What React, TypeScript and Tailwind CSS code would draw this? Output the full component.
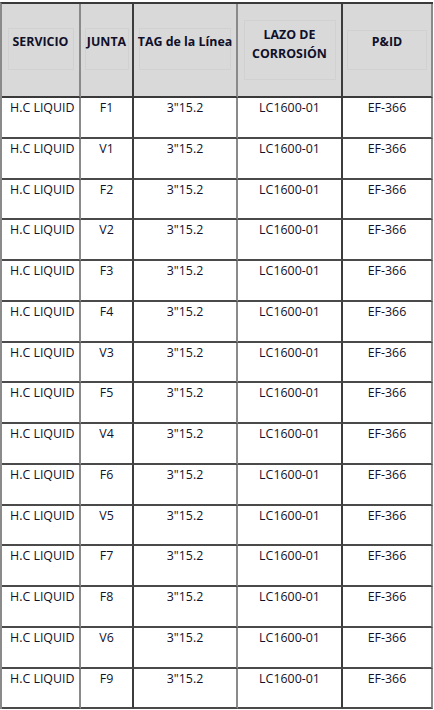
import React from "react";

const rows = [
  "F1", "V1", "F2", "V2", "F3", "F4", "V3", "F5", "V4", "F6", "V5", "F7", "F8", "V6", "F9",
];

const font = { fontFamily: '"Open Sans", "Noto Sans", Arial, sans-serif' };

function HeadCell({ children, box, dark }: { children: React.ReactNode; box: string; dark?: boolean }) {
  return (
    <div
      className={`h-[94px] bg-[#d9d9d9] border-b-2 border-b-[#3a3a3a] border-r-2 ${dark ? "border-r-[#3c3c3c]" : "border-r-[#8a8a8a]"} flex justify-center`}
    >
      <div className={`${box} border border-[#d1d1d1] flex flex-col items-center`}>{children}</div>
    </div>
  );
}

export default function App() {
  return (
    <div className="w-[434px] h-[710px] bg-white overflow-hidden" style={font}>
      <div className="mt-[2px] w-[433px] border-t-2 border-t-[#3a3a3a] border-l-2 border-l-[#8a8a8a] grid grid-cols-[79px_53px_104px_105px_90px] text-[12.4px] text-[#10102a]">
        <HeadCell box="mt-[24px] w-[66px] h-[42px] pt-[5px]">
          <span className="font-bold leading-[16px]">SERVICIO</span>
        </HeadCell>
        <HeadCell box="mt-[24px] w-[44px] h-[42px] pt-[5px]" dark>
          <span className="font-bold leading-[16px]">JUNTA</span>
        </HeadCell>
        <HeadCell box="mt-[24px] w-[92px] h-[42px] pt-[5px]">
          <span className="font-bold leading-[16px] whitespace-nowrap">TAG de la Línea</span>
        </HeadCell>
        <HeadCell box="mt-[16px] w-[92px] h-[60px] pt-[4px]" dark>
          <span className="font-bold leading-[19px] text-center">
            LAZO DE
            <br />
            CORROSIÓN
          </span>
        </HeadCell>
        <HeadCell box="mt-[26px] w-[80px] h-[40px] pt-[3px]">
          <span className="font-bold leading-[16px]">P&amp;ID</span>
        </HeadCell>

        {rows.map((j, i) => (
          <React.Fragment key={i}>
            <div className="h-[40.75px] border-b-2 border-b-[#4a4a4a] border-r-2 border-r-[#8a8a8a] pl-[8px] pt-[2px] leading-[16px] whitespace-nowrap">
              H.C LIQUID
            </div>
            <div className="h-[40.75px] border-b-2 border-b-[#4a4a4a] border-r-2 border-r-[#3c3c3c] pt-[2px] leading-[16px] text-center">
              {j}
            </div>
            <div className="h-[40.75px] border-b-2 border-b-[#4a4a4a] border-r-2 border-r-[#8a8a8a] pt-[2px] leading-[16px] text-center">
              3"15.2
            </div>
            <div className="h-[40.75px] border-b-2 border-b-[#4a4a4a] border-r-2 border-r-[#3c3c3c] pt-[2px] leading-[16px] text-center">
              LC1600-01
            </div>
            <div className="h-[40.75px] border-b-2 border-b-[#4a4a4a] border-r-2 border-r-[#8a8a8a] pt-[2px] leading-[16px] text-center">
              EF-366
            </div>
          </React.Fragment>
        ))}
      </div>
    </div>
  );
}
